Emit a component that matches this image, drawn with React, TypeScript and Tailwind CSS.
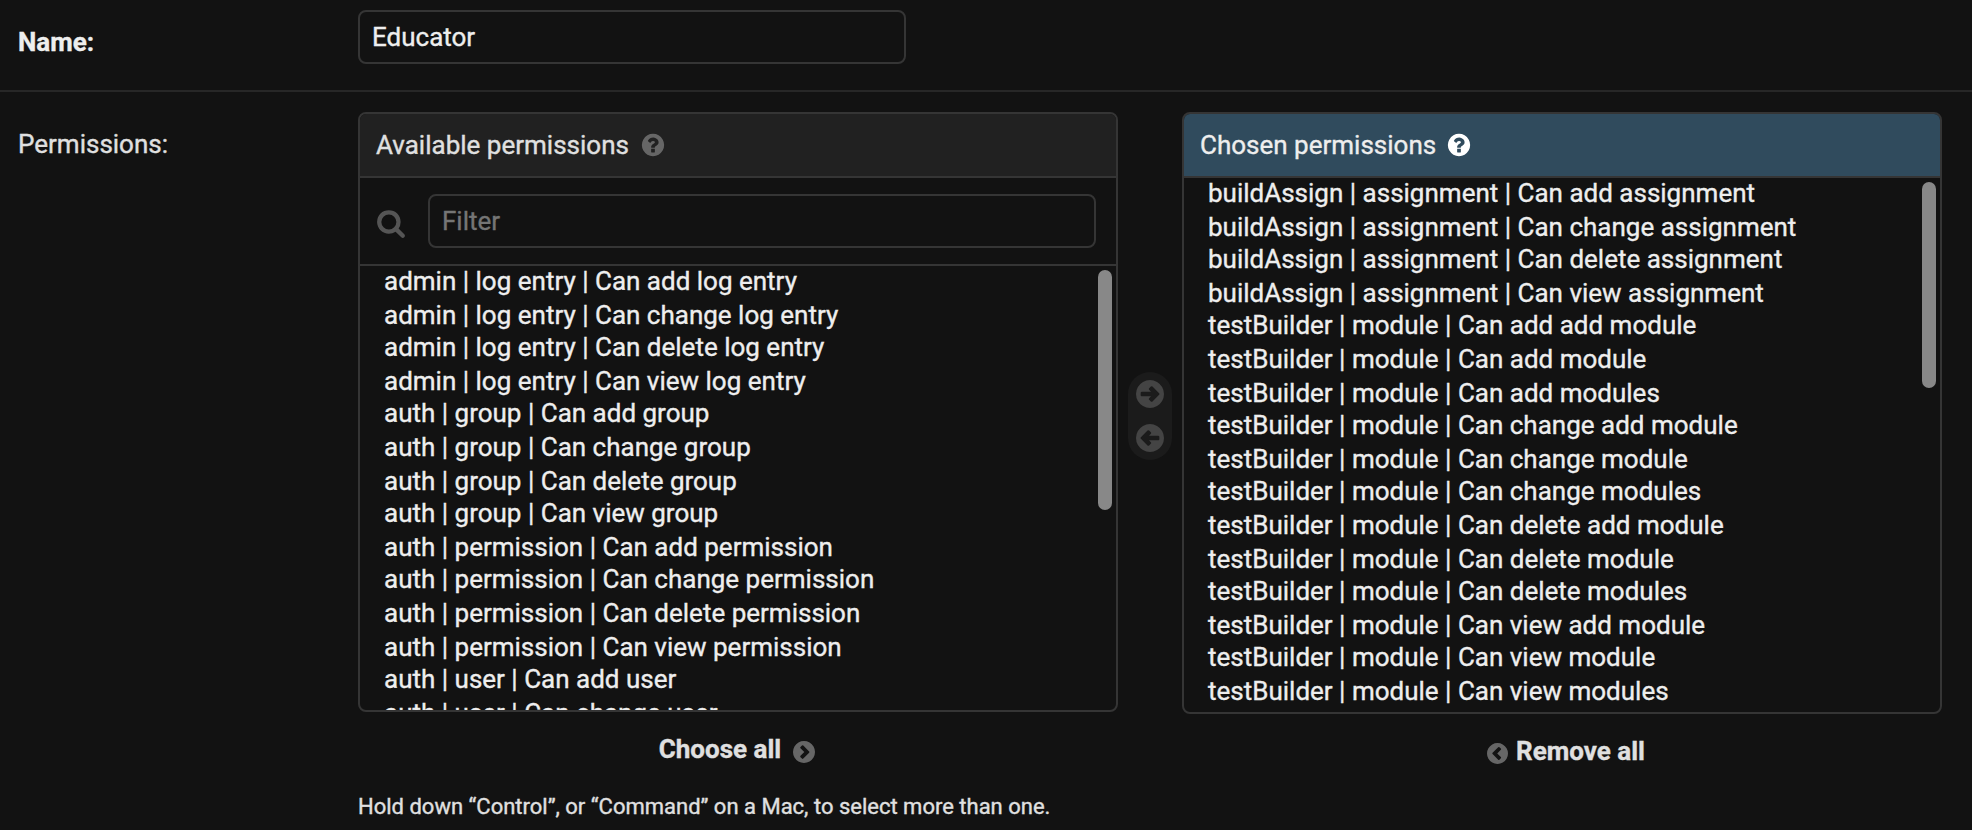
import React from "react";

const available: [string, string][] = [
  ["admin | log entry | Can add log entry", "h-[34px]"],
  ["admin | log entry | Can change log entry", "h-[32px]"],
  ["admin | log entry | Can delete log entry", "h-[34px]"],
  ["admin | log entry | Can view log entry", "h-[32px]"],
  ["auth | group | Can add group", "h-[34px]"],
  ["auth | group | Can change group", "h-[34px]"],
  ["auth | group | Can delete group", "h-[32px]"],
  ["auth | group | Can view group", "h-[34px]"],
  ["auth | permission | Can add permission", "h-[32px]"],
  ["auth | permission | Can change permission", "h-[34px]"],
  ["auth | permission | Can delete permission", "h-[34px]"],
  ["auth | permission | Can view permission", "h-[32px]"],
  ["auth | user | Can add user", "h-[34px]"],
  ["auth | user | Can change user", "h-[32px]"],
];

const chosen: [string, string][] = [
  ["buildAssign | assignment | Can add assignment", "h-[34px]"],
  ["buildAssign | assignment | Can change assignment", "h-[32px]"],
  ["buildAssign | assignment | Can delete assignment", "h-[34px]"],
  ["buildAssign | assignment | Can view assignment", "h-[32px]"],
  ["testBuilder | module | Can add add module", "h-[34px]"],
  ["testBuilder | module | Can add module", "h-[34px]"],
  ["testBuilder | module | Can add modules", "h-[32px]"],
  ["testBuilder | module | Can change add module", "h-[34px]"],
  ["testBuilder | module | Can change module", "h-[32px]"],
  ["testBuilder | module | Can change modules", "h-[34px]"],
  ["testBuilder | module | Can delete add module", "h-[34px]"],
  ["testBuilder | module | Can delete module", "h-[32px]"],
  ["testBuilder | module | Can delete modules", "h-[34px]"],
  ["testBuilder | module | Can view add module", "h-[32px]"],
  ["testBuilder | module | Can view module", "h-[34px]"],
  ["testBuilder | module | Can view modules", "h-[32px]"],
];

function HelpIcon({ className }: { className: string }) {
  return (
    <svg viewBox="0 0 1792 1792" className={className} fill="currentColor">
      <path d="M1024 1376v-192q0-14-9-23t-23-9h-192q-14 0-23 9t-9 23v192q0 14 9 23t23 9h192q14 0 23-9t9-23zm256-672q0-88-55.500-163t-138.500-116-170-41q-243 0-371 213-15 24 8 42l132 100q7 6 19 6 16 0 25-12 53-68 86-92 34-24 86-24 48 0 85.500 26t37.500 59q0 38-20 61t-68 45q-63 28-115.500 86.500t-52.500 125.500v36q0 14 9 23t23 9h192q14 0 23-9t9-23q0-19 21.500-49.500t54.500-49.500q32-18 49-28.500t46-35 44.500-48 28-60.500 12.500-81zm384 192q0 209-103 385.500t-279.500 279.500-385.500 103-385.500-103-279.500-279.500-103-385.500 103-385.500 279.500-279.500 385.500-103 385.500 103 279.500 279.500 103 385.500z" />
    </svg>
  );
}

function SearchIcon() {
  return (
    <svg viewBox="0 0 1792 1792" className="mt-[4px] size-[30px] text-[#555555]" fill="currentColor">
      <path d="M1216 832q0-185-131.500-316.500t-316.500-131.500-316.500 131.500-131.500 316.500 131.500 316.500 316.500 131.500 316.500-131.500 131.500-316.500zm512 832q0 52-38 90t-90 38q-54 0-90-38l-343-342q-179 124-399 124-143 0-273.500-55.500t-225-150-150-225-55.500-273.500 55.500-273.500 150-225 225-150 273.500-55.500 273.500 55.500 225 150 150 225 55.500 273.500q0 220-124 399l343 343q37 37 37 90z" />
    </svg>
  );
}

function ArrowIcon({ flip }: { flip?: boolean }) {
  return (
    <svg viewBox="0 0 1536 1536" className={flip ? "size-7 rotate-180" : "size-7"} fill="#444444">
      <path d="M1285 768q0-27-18-45L904 360q-18-18-45-18t-45 18l-91 91q-18 18-18 45t18 45l99 99H320q-26 0-45 19t-19 45v128q0 26 19 45t45 19h502l-99 99q-19 19-19 45t19 45l91 91q18 18 45 18t45-18l363-363q18-18 18-45zm251 0q0 209-103 385.500T1153.500 1433 768 1536t-385.500-103T103 1153.500 0 768t103-385.500T382.500 103 768 0t385.500 103T1433 382.500 1536 768z" />
    </svg>
  );
}

function ChevronIcon({ className }: { className: string }) {
  return (
    <svg viewBox="0 0 1536 1536" className={className} fill="#666666">
      <path d="M717 1229l410-410q19-19 19-45t-19-45L717 319q-19-19-45-19t-45 19L525 421q-19 19-19 45t19 45l263 263-263 263q-19 19-19 45t19 45l102 102q19 19 45 19t45-19zm819-461q0 209-103 385.500T1153.500 1433 768 1536t-385.500-103T103 1153.500 0 768t103-385.500T382.500 103 768 0t385.500 103T1433 382.500 1536 768z" />
    </svg>
  );
}

function OptionList({ items }: { items: [string, string][] }) {
  return (
    <ul className="min-w-0 flex-1 overflow-hidden pl-6 text-[#eeeeee]">
      {items.map(([label, height]) => (
        <li key={label} className={`${height} leading-[30px] whitespace-nowrap`}>
          {label}
        </li>
      ))}
    </ul>
  );
}

export default function App() {
  return (
    <div className="h-[830px] w-[1972px] overflow-hidden bg-[#121212] font-[Roboto,sans-serif] text-[26px] text-[#e0e0e0] [-webkit-text-stroke:0.35px]">
      <div className="flex h-[92px] border-b-2 border-[#272727] pt-[10px] pl-[18px]">
        <label className="w-[340px] pt-[16px] leading-[32px] font-bold text-[#eeeeee]">Name:</label>
        <div className="h-[54px] w-[548px] rounded-lg border-2 border-[#353535] px-3 leading-[50px] text-[#eeeeee]">
          Educator
        </div>
      </div>

      <div className="flex pt-5 pl-[18px]">
        <div className="w-[340px] pt-[16px] leading-[32px]">Permissions:</div>
        <div>
          <div className="flex items-start">
            <section className="w-[760px]">
              <div className="flex h-[600px] flex-col overflow-hidden rounded-lg border-2 border-[#353535]">
                <h2 className="flex h-[64px] shrink-0 items-center border-b-2 border-[#353535] bg-[#212121] pl-4">
                  Available permissions
                  <HelpIcon className="ml-[11px] size-[26px] text-[#666666]" />
                </h2>
                <div className="flex h-[88px] shrink-0 items-center border-b-2 border-[#353535] pr-5 pl-4">
                  <SearchIcon />
                  <div className="ml-[22px] h-[54px] flex-1 rounded-lg border-2 border-[#353535] px-3 leading-[50px] text-[#757575]">
                    Filter
                  </div>
                </div>
                <div className="flex min-h-0 flex-1 pr-1">
                  <OptionList items={available} />
                  <div className="mt-1 h-[240px] w-[14px] rounded-full bg-[#888888]" />
                </div>
              </div>
              <div className="flex justify-center pt-[21px] pr-[2px] leading-[32px] font-bold">
                Choose all
                <ChevronIcon className="mt-[8px] ml-[12px] size-[22px]" />
              </div>
            </section>

            <div className="mx-[10px] mt-[260px] flex h-[88px] w-11 flex-col items-center justify-between rounded-full bg-[#1b1b1b] py-2">
              <ArrowIcon />
              <ArrowIcon flip />
            </div>

            <section className="w-[760px]">
              <div className="flex h-[602px] flex-col overflow-hidden rounded-lg border-2 border-[#353535]">
                <h2 className="flex h-[64px] shrink-0 items-center border-b-2 border-[#353535] bg-[#304b5d] pl-4 text-[#eeeeee]">
                  Chosen permissions
                  <HelpIcon className="ml-[10px] size-[26px] text-white" />
                </h2>
                <div className="flex min-h-0 flex-1 pr-1">
                  <OptionList items={chosen} />
                  <div className="mt-1 h-[206px] w-[14px] rounded-full bg-[#888888]" />
                </div>
              </div>
              <div className="flex justify-center pt-[21px] pl-[8px] leading-[32px] font-bold">
                <ChevronIcon className="mt-[8px] mr-[8px] size-[21px] rotate-180" />
                Remove all
              </div>
            </section>
          </div>
          <p className="mt-6 text-[22px] leading-[32px]">
            Hold down “Control”, or “Command” on a Mac, to select more than one.
          </p>
        </div>
      </div>
    </div>
  );
}
